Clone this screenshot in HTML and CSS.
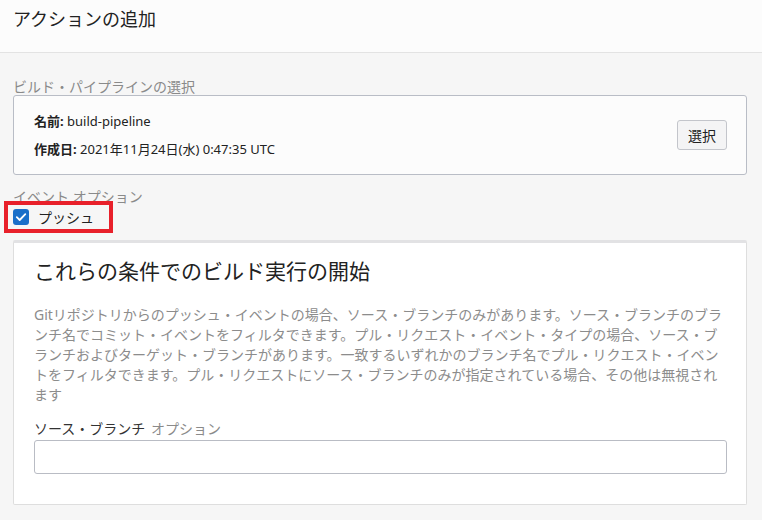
FILE: index.html
```html
<!DOCTYPE html>
<html lang="ja">
<head>
    <meta charset="utf-8">
    <title>アクションの追加</title>
    <link rel="stylesheet" href="styles.css">
</head>
<body>
    <header class="panelHeader">
        <h1>アクションの追加</h1>
    </header>

    <main class="panelBody">
        <div class="fieldLabel">ビルド・パイプラインの選択</div>
        <div class="pipelineCard">
            <div class="pipelineInfo">
                <div><b>名前:</b> build-pipeline</div>
                <div><b>作成日:</b> 2021年11月24日(水) 0:47:35 UTC</div>
            </div>
            <button type="button" class="selectButton">選択</button>
        </div>

        <div class="fieldLabel eventLabel">イベント オプション</div>
        <div class="highlight">
            <label class="checkRow">
                <svg class="checkBox" width="16" height="16" viewBox="0 0 16 16">
                    <rect width="16" height="16" rx="3" fill="#1a6fc9"/>
                    <path d="M3.8 8.2 L6.7 11 L12.3 5.2" fill="none" stroke="#fff" stroke-width="1.8" stroke-linecap="round" stroke-linejoin="round"/>
                </svg>
                プッシュ
            </label>
        </div>

        <section class="conditionCard">
            <h2>これらの条件でのビルド実行の開始</h2>
            <p class="helpText">Gitリポジトリからのプッシュ・イベントの場合、ソース・ブランチのみがあります。ソース・ブランチのブランチ名でコミット・イベントをフィルタできます。プル・リクエスト・イベント・タイプの場合、ソース・ブランチおよびターゲット・ブランチがあります。一致するいずれかのブランチ名でプル・リクエスト・イベントをフィルタできます。プル・リクエストにソース・ブランチのみが指定されている場合、その他は無視されます</p>
            <label class="inputLabel" for="sourceBranch">ソース・ブランチ <span class="optional">オプション</span></label>
            <input type="text" id="sourceBranch" class="textInput">
        </section>
    </main>
</body>
</html>
```

FILE: styles.css
```css
body {
    margin: 0;
    background-color: #f6f6f6;
    font-family: "Noto Sans", "Noto Sans CJK JP", sans-serif;
    color: #222;
}

.panelHeader {
    background-color: #fcfcfc;
    border-bottom: 1px solid #e3e3e3;
    height: 53px;
    padding: 7px 13px 0;
    box-sizing: border-box;
}

.panelHeader h1 {
    margin: 0;
    font-size: 18px;
    font-weight: normal;
    line-height: 24px;
    color: #222;
}

.panelBody {
    padding: 25px 15px 0 13px;
}

.fieldLabel {
    font-size: 14px;
    line-height: 17px;
    color: #8a8a8a;
}

.pipelineCard {
    display: flex;
    align-items: center;
    justify-content: space-between;
    background-color: #fcfcfc;
    border: 1px solid #b9bdc6;
    border-radius: 3px;
    padding: 15px 19px 15px 20px;
}

.pipelineInfo {
    display: flex;
    flex-direction: column;
    gap: 8px;
    font-size: 13px;
    line-height: 20px;
}

.pipelineInfo b {
    font-weight: bold;
}

.selectButton {
    width: 50px;
    height: 30px;
    padding: 0;
    font-family: inherit;
    font-size: 14px;
    color: #222;
    background-color: #f4f4f5;
    border: 1px solid #c3c5cb;
    border-radius: 3px;
}

.eventLabel {
    margin-top: 13px;
}

.highlight {
    display: inline-block;
    margin-left: -9px;
    margin-top: -4px;
    border: 4px solid #e8202a;
    height: 24px;
    padding: 0 15px 0 5px;
}

.checkRow {
    display: flex;
    align-items: center;
    gap: 9px;
    height: 24px;
    font-size: 14px;
    color: #222;
}

.checkBox {
    display: block;
}

.conditionCard {
    margin-top: 7px;
    background-color: #fff;
    border: 1px solid #dedede;
    border-top: 3px solid #e2e2e4;
    border-radius: 2px;
    padding: 14px 19px 30px 20px;
}

.conditionCard h2 {
    margin: 0;
    font-size: 21px;
    font-weight: normal;
    line-height: 28px;
    color: #222;
}

.helpText {
    margin: 20px 0 0;
    font-size: 14px;
    line-height: 20px;
    color: #8c8c8c;
}

.inputLabel {
    display: block;
    margin-top: 15px;
    font-size: 14px;
    line-height: 18px;
    color: #333;
}

.optional {
    color: #8a8a8a;
    margin-left: 2px;
}

.textInput {
    display: block;
    width: 100%;
    height: 34px;
    margin-top: 2px;
    box-sizing: border-box;
    border: 1px solid #b9bcc4;
    border-radius: 3px;
    background-color: #fff;
}
```
